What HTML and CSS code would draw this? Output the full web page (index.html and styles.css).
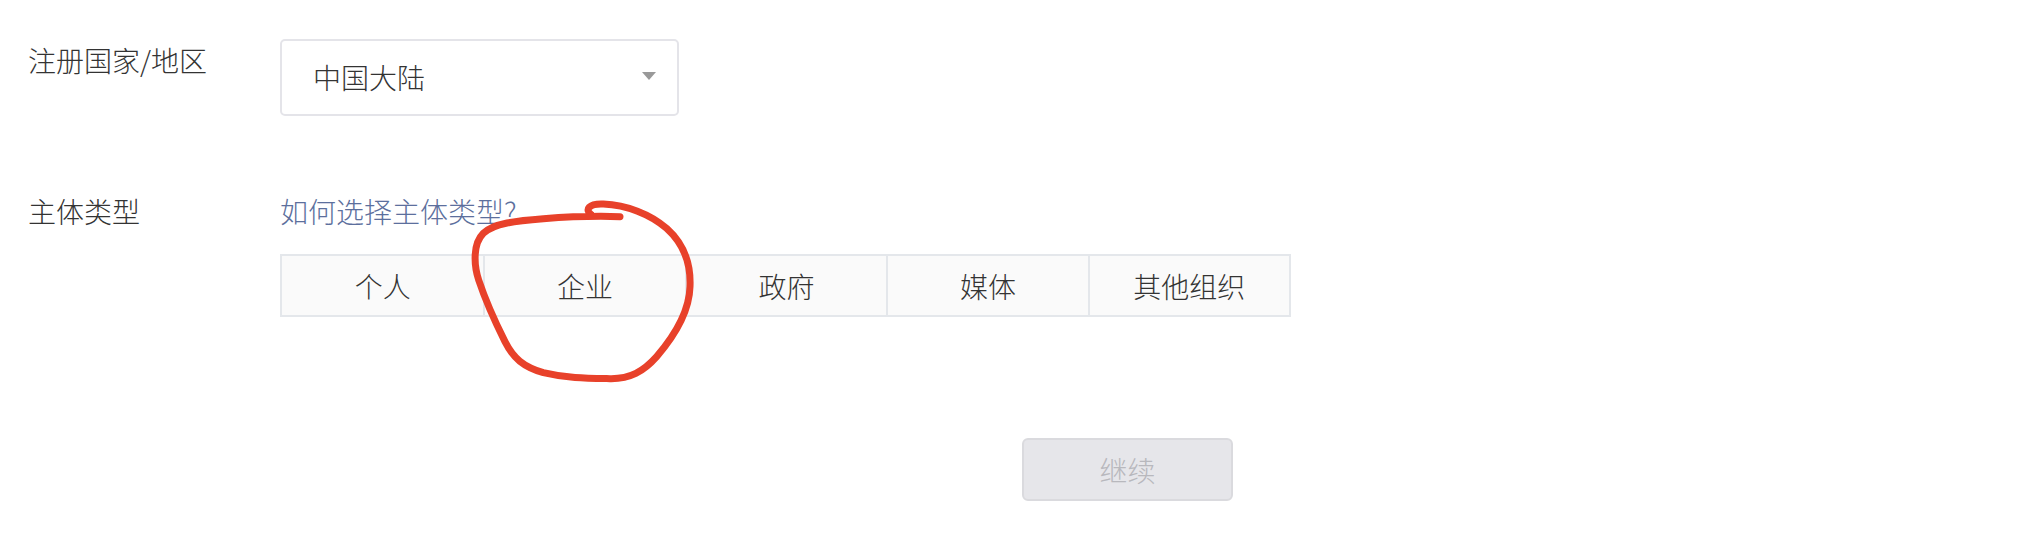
FILE: index.html
```html
<!DOCTYPE html>
<html lang="zh-CN">
<head>
<meta charset="utf-8">
<title>主体类型</title>
<link rel="stylesheet" href="styles.css">
</head>
<body>
<div class="page">
  <div class="form-row row-region">
    <div class="label">注册国家/地区</div>
    <div class="field">
      <div class="select">
        <span class="select-value">中国大陆</span>
        <span class="select-arrow"></span>
      </div>
    </div>
  </div>
  <div class="form-row row-type">
    <div class="label">主体类型</div>
    <div class="field">
      <a class="help-link" href="#">如何选择主体类型?</a>
      <div class="type-table">
        <div class="type-cell">个人</div>
        <div class="type-cell">企业</div>
        <div class="type-cell">政府</div>
        <div class="type-cell">媒体</div>
        <div class="type-cell">其他组织</div>
      </div>
      <div class="actions">
        <button class="btn-continue" type="button" disabled>继续</button>
      </div>
    </div>
  </div>
  <svg class="annotation" viewBox="0 0 750 600" width="250" height="200" aria-hidden="true">
    <path d="M 480 80 C 420 78 330 80 250 86 C 170 92 100 100 70 130 C 40 160 40 220 56 270 C 76 330 105 395 135 455 C 160 505 190 530 250 548 C 320 565 380 565 450 566 C 510 567 550 545 590 500 C 650 430 688 360 690 290 C 693 220 670 160 620 115 C 570 72 500 45 430 42 C 385 40 375 60 392 72" fill="none" stroke="#e8412a" stroke-width="21" stroke-linecap="round" stroke-linejoin="round"/>
  </svg>
</div>
</body>
</html>
```

FILE: styles.css
```css
html, body {
  margin: 0;
  padding: 0;
  background: #ffffff;
}

body {
  font-family: "Noto Sans CJK SC", "Noto Sans", "Liberation Sans", sans-serif;
  font-size: 28px;
  font-weight: 300;
  color: #333333;
}

.page {
  position: relative;
  padding: 39px 0 0 28px;
  height: 540px;
  box-sizing: border-box;
}

.form-row {
  display: flex;
}

.label {
  width: 252px;
  flex: none;
  line-height: 28px;
  color: #333333;
}

.row-region .label {
  padding-top: 7px;
}

.field {
  display: flex;
  flex-direction: column;
  align-items: flex-start;
}

.select {
  width: 399px;
  height: 77px;
  box-sizing: border-box;
  border: 2px solid #e4e4e9;
  border-radius: 5px;
  display: flex;
  align-items: center;
  justify-content: space-between;
  padding: 0 21px 2px 31px;
  background: #ffffff;
}

.select-value {
  line-height: 28px;
  color: #333333;
}

.select-arrow {
  width: 0;
  height: 0;
  border-left: 7px solid transparent;
  border-right: 7px solid transparent;
  border-top: 8px solid #999999;
  margin-top: -1px;
}

.row-type {
  margin-top: 81px;
}

.help-link {
  line-height: 28px;
  color: #5c6f9d;
  text-decoration: none;
}

.type-table {
  margin-top: 29px;
  width: 1011px;
  height: 63px;
  box-sizing: border-box;
  border: 2px solid #e4e7eb;
  display: grid;
  grid-template-columns: repeat(5, 1fr);
  background: #fafafa;
}

.type-cell {
  display: flex;
  align-items: center;
  justify-content: center;
  line-height: 28px;
  color: #333333;
  border-left: 2px solid #e4e7eb;
}

.type-cell:first-child {
  border-left: none;
}

.actions {
  margin-top: 121px;
  margin-left: 742px;
}

.btn-continue {
  width: 211px;
  height: 63px;
  box-sizing: border-box;
  border: 2px solid #dadade;
  border-radius: 6px;
  background: #e6e6ea;
  color: #b8b8bd;
  font-family: "Noto Sans CJK SC", "Noto Sans", "Liberation Sans", sans-serif;
  font-size: 28px;
  font-weight: 300;
  line-height: 28px;
  padding: 0;
}

.annotation {
  position: absolute;
  left: 460px;
  top: 190px;
  overflow: visible;
}
```
